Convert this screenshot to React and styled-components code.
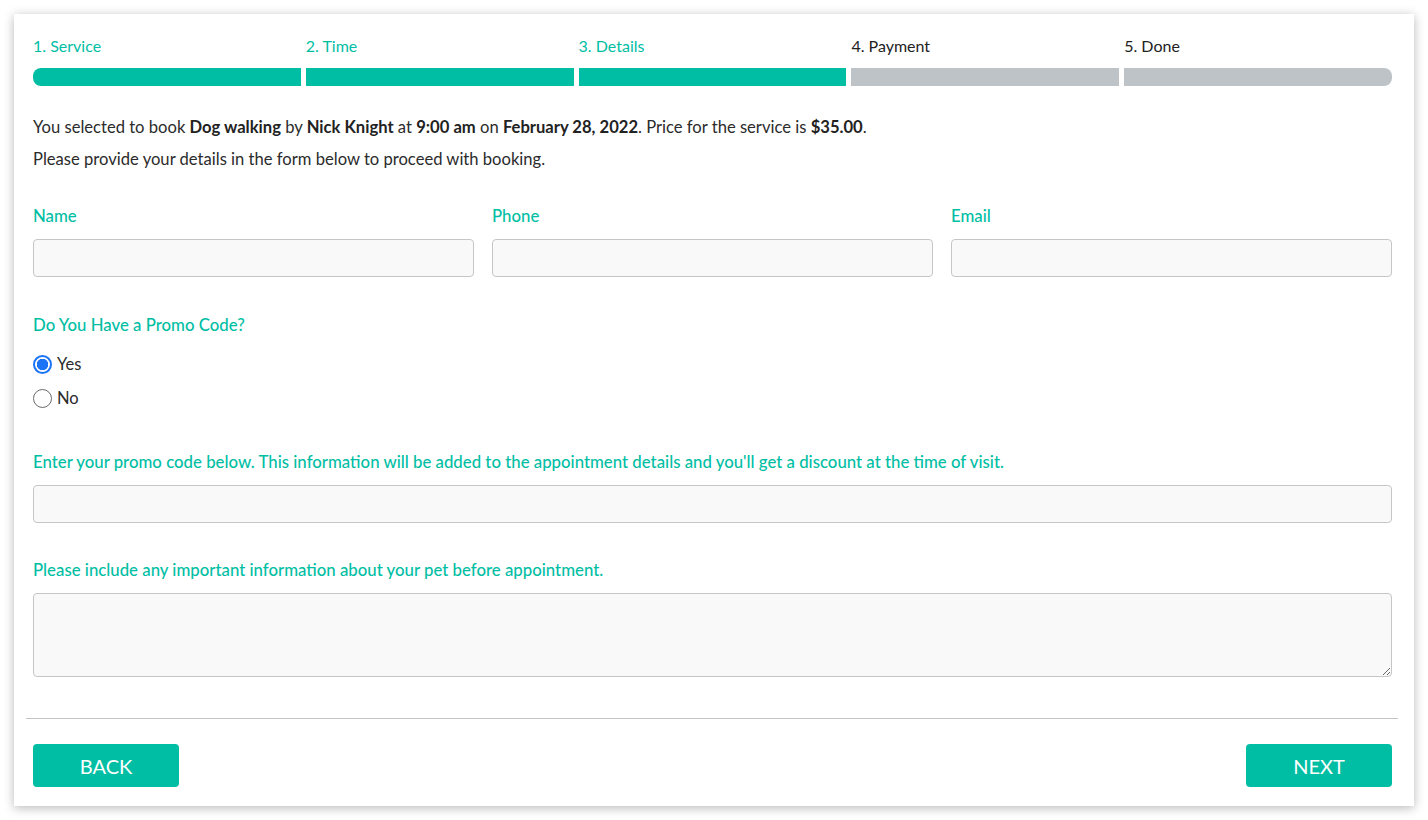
import { useState } from "react";
import styled, { createGlobalStyle } from "styled-components";

const teal = "#00bea4";

const GlobalStyle = createGlobalStyle`
  * { box-sizing: border-box; }
  body {
    margin: 0;
    padding: 14px;
    background: #fff;
    font-family: Lato, "Open Sans", sans-serif;
    color: #2b2b2b;
  }
`;

const Card = styled.div`
  width: 1400px;
  height: 792px;
  background: #fff;
  box-shadow: 0 2px 10px rgba(0, 0, 0, 0.28);
  padding: 22px 22px 20px 19px;
  display: flex;
  flex-direction: column;
`;

const Steps = styled.div`
  display: grid;
  grid-template-columns: repeat(5, 1fr);
  gap: 5px;
`;

const Step = styled.div`
  display: flex;
  flex-direction: column;
  gap: 12px;
`;

const StepLabel = styled.span`
  font-size: 16px;
  line-height: 20px;
  color: ${(p) => (p.$done ? teal : "#222")};
`;

const StepBar = styled.div`
  height: 18px;
  background: ${(p) => (p.$done ? teal : "#bec3c7")};
  border-radius: ${(p) =>
    p.$first ? "8px 0 0 8px" : p.$last ? "0 8px 8px 0" : "0"};
`;

const Intro = styled.p`
  margin: ${(p) => (p.$first ? "29px 0 8px" : "0")};
  font-size: 16.6px;
  line-height: 24px;
  color: #2b2b2b;
  b { font-weight: 700; color: #222; }
`;

const FieldRow = styled.div`
  display: grid;
  grid-template-columns: repeat(3, 1fr);
  gap: 18px;
  margin-top: 35px;
`;

const Field = styled.div`
  display: flex;
  flex-direction: column;
  gap: 13px;
  margin-top: ${(p) => p.$top || 0}px;
`;

const Label = styled.label`
  font-size: 16.8px;
  line-height: 20px;
  color: ${teal};
  font-weight: 500;
`;

const Input = styled.input`
  height: 38px;
  width: 100%;
  background: #f9f9f9;
  border: 1px solid #c6c6c6;
  border-radius: 4px;
  padding: 0 10px;
  font: inherit;
  outline: none;
`;

const TextArea = styled.textarea`
  height: 84px;
  width: 100%;
  background: #f9f9f9;
  border: 1px solid #c6c6c6;
  border-radius: 4px;
  padding: 8px 10px;
  font: inherit;
  outline: none;
  resize: vertical;
`;

const RadioGroup = styled.div`
  display: flex;
  flex-direction: column;
  margin-top: 17px;
  gap: 10px;
`;

const RadioRow = styled.label`
  display: flex;
  align-items: center;
  gap: 5px;
  font-size: 16.5px;
  line-height: 24px;
  color: #2b2b2b;
  cursor: pointer;
`;

const Radio = styled.input.attrs({ type: "radio" })`
  appearance: none;
  margin: 0;
  width: 19px;
  height: 19px;
  border-radius: 50%;
  border: 1px solid #6b6b6b;
  background: #fff;
  &:checked {
    border: 2px solid #1b74f5;
    background: radial-gradient(circle, #1b74f5 0 5.5px, #fff 6px);
  }
`;

const Divider = styled.hr`
  margin: 41px -6px 0 -7px;
  border: none;
  border-top: 1px solid #c4c4c4;
`;

const Footer = styled.div`
  display: flex;
  justify-content: space-between;
  margin-top: 25px;
`;

const Button = styled.button`
  width: 146px;
  height: 43px;
  background: ${teal};
  color: #fff;
  border: none;
  border-radius: 4px;
  font-family: Lato, "Open Sans", sans-serif;
  font-size: 20px;
  text-transform: uppercase;
  cursor: pointer;
`;

const steps = ["1. Service", "2. Time", "3. Details", "4. Payment", "5. Done"];

export default function App() {
  const [promo, setPromo] = useState("yes");

  return (
    <>
      <GlobalStyle />
      <Card>
        <Steps>
          {steps.map((s, i) => (
            <Step key={s}>
              <StepLabel $done={i < 3}>{s}</StepLabel>
              <StepBar $done={i < 3} $first={i === 0} $last={i === steps.length - 1} />
            </Step>
          ))}
        </Steps>

        <Intro $first>
          You selected to book <b>Dog walking</b> by <b>Nick Knight</b> at <b>9:00 am</b> on{" "}
          <b>February 28, 2022</b>. Price for the service is <b>$35.00</b>.
        </Intro>
        <Intro>Please provide your details in the form below to proceed with booking.</Intro>

        <FieldRow>
          <Field>
            <Label>Name</Label>
            <Input />
          </Field>
          <Field>
            <Label>Phone</Label>
            <Input />
          </Field>
          <Field>
            <Label>Email</Label>
            <Input />
          </Field>
        </FieldRow>

        <Field $top={38}>
          <Label>Do You Have a Promo Code?</Label>
        </Field>
        <RadioGroup>
          <RadioRow>
            <Radio name="promo" checked={promo === "yes"} onChange={() => setPromo("yes")} />
            Yes
          </RadioRow>
          <RadioRow>
            <Radio name="promo" checked={promo === "no"} onChange={() => setPromo("no")} />
            No
          </RadioRow>
        </RadioGroup>

        <Field $top={42}>
          <Label>
            Enter your promo code below. This information will be added to the appointment details and
            you'll get a discount at the time of visit.
          </Label>
          <Input />
        </Field>

        <Field $top={37}>
          <Label>Please include any important information about your pet before appointment.</Label>
          <TextArea />
        </Field>

        <Divider />

        <Footer>
          <Button>Back</Button>
          <Button>Next</Button>
        </Footer>
      </Card>
    </>
  );
}
